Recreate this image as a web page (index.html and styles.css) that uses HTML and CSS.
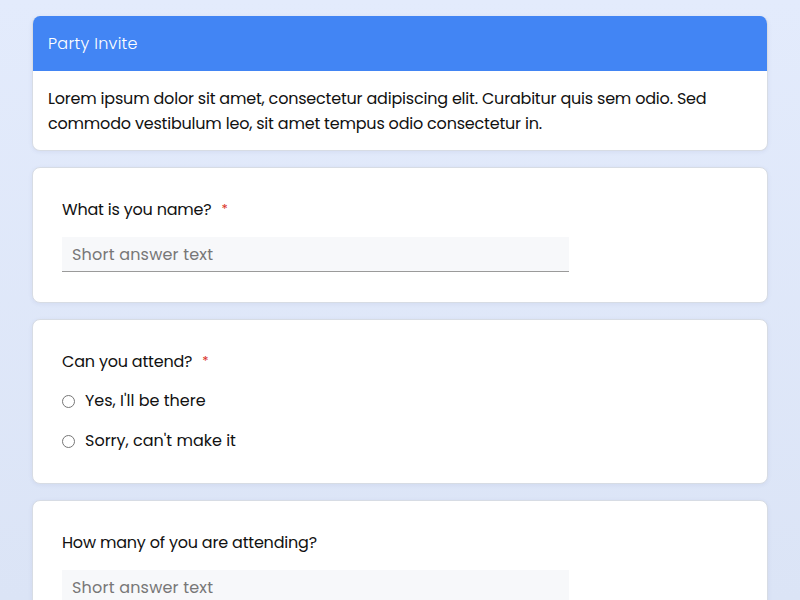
FILE: index.html
```html
<!DOCTYPE html>
<html>
<head>
<meta charset="utf-8">
<link rel="stylesheet" href="styles.css">
</head>
<body>
<main class="form">
  <section class="card intro">
    <header class="intro-head">Party Invite</header>
    <p class="intro-body">Lorem ipsum dolor sit amet, consectetur adipiscing elit. Curabitur quis sem odio. Sed commodo vestibulum leo, sit amet tempus odio consectetur in.</p>
  </section>
  <section class="card question">
    <div class="q-title">What is you name?<span class="req">*</span></div>
    <input class="short" type="text" placeholder="Short answer text">
  </section>
  <section class="card question">
    <div class="q-title">Can you attend?<span class="req">*</span></div>
    <div class="options">
      <label class="option"><span class="radio"></span>Yes, I'll be there</label>
      <label class="option"><span class="radio"></span>Sorry, can't make it</label>
    </div>
  </section>
  <section class="card question">
    <div class="q-title">How many of you are attending?</div>
    <input class="short" type="text" placeholder="Short answer text">
  </section>
</main>
</body>
</html>
```
FILE: styles.css
```css
html, body {
  margin: 0;
  height: 100%;
}
body {
  background: linear-gradient(180deg, #e3ebfc 0%, #dbe4f6 100%);
  font-family: "Poppins", "Lato", "Noto Sans", sans-serif;
  font-size: 16px;
  letter-spacing: -0.2px;
  color: #111;
  overflow: hidden;
}
.form {
  display: flex;
  flex-direction: column;
  gap: 16px;
  padding: 16px 32px;
}
.card {
  background: #fff;
  border: 1px solid #d7dce4;
  border-radius: 8px;
  box-shadow: 0 1px 4px rgba(60, 80, 140, 0.08);
  overflow: hidden;
}
.intro {
  border-top: none;
}
.intro-head {
  background: #4285f4;
  color: #fff;
  height: 55px;
  display: flex;
  align-items: center;
  padding: 0 15px;
  font-weight: 300;
  letter-spacing: 0.3px;
}
.intro-body {
  margin: 0;
  padding: 15px 15px 14px;
  line-height: 25px;
}
.question {
  padding: 30px 29px 30px;
  display: flex;
  flex-direction: column;
  gap: 15px;
}
.q-title {
  height: 24px;
  line-height: 24px;
}
.req {
  color: #d93025;
  margin-left: 10px;
  font-size: 13px;
  line-height: 0;
  vertical-align: 2px;
}
.short {
  width: 507px;
  height: 35px;
  box-sizing: border-box;
  border: none;
  border-bottom: 1px solid #9a9a9a;
  background: #f7f8fa;
  padding: 0 10px;
  font: inherit;
  letter-spacing: 0.2px;
  color: #333;
  outline: none;
}
.short::placeholder {
  color: #777;
}
.options {
  display: flex;
  flex-direction: column;
  gap: 16px;
}
.option {
  display: flex;
  align-items: center;
  gap: 10px;
  line-height: 24px;
  letter-spacing: 0;
}
.radio {
  width: 13px;
  height: 13px;
  box-sizing: border-box;
  border: 1px solid #767676;
  border-radius: 50%;
  background: #fff;
}
```
